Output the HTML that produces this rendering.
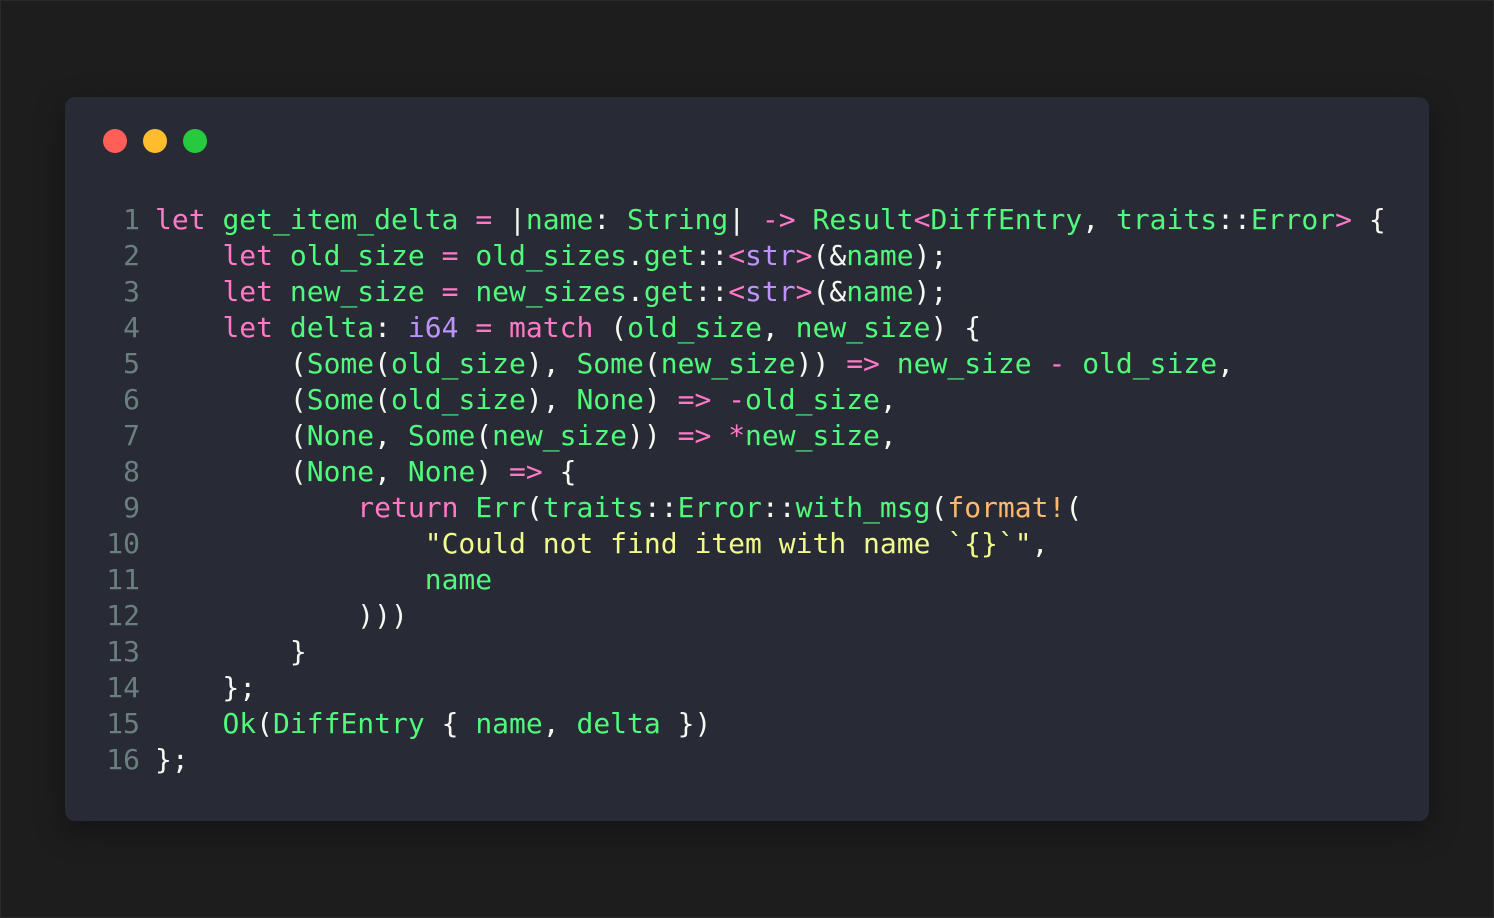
<!DOCTYPE html>
<html><head><meta charset="utf-8"><style>
html,body{margin:0;padding:0}
body{width:1494px;height:918px;background:#1d1d1d;position:relative;overflow:hidden;box-shadow:inset 0 0 0 1px #2a2a2a}
.win{position:absolute;left:65px;top:97px;width:1364px;height:724px;background:#282a36;border-radius:10px;box-shadow:0 10px 30px rgba(0,0,0,.35)}
.dot{position:absolute;top:129px;width:24px;height:24px;border-radius:50%}
.ln{position:absolute;left:80px;width:60px;text-align:right;color:#6b7f7f}
.code,.ln{font-family:"DejaVu Sans Mono","Liberation Mono",monospace;font-size:28px;line-height:36px;white-space:pre}
.code{position:absolute;left:155px;top:202px;color:#f8f8f2}
.ln{top:202px}
.k{color:#ff79c6}.g{color:#50fa7b}.p{color:#bd93f9}.o{color:#ffb86c}.y{color:#f1fa8c}
</style></head><body>
<div class="win"></div>
<div class="dot" style="left:103px;background:#ff5f56"></div>
<div class="dot" style="left:143px;background:#ffbd2e"></div>
<div class="dot" style="left:183px;background:#27c93f"></div>
<div class="ln">1
2
3
4
5
6
7
8
9
10
11
12
13
14
15
16</div>
<div class="code"><span class="k">let</span> <span class="g">get_item_delta</span> <span class="k">=</span> |<span class="g">name</span>: <span class="g">String</span>| <span class="k">-&gt;</span> <span class="g">Result</span><span class="k">&lt;</span><span class="g">DiffEntry</span>, <span class="g">traits</span>::<span class="g">Error</span><span class="k">&gt;</span> {
    <span class="k">let</span> <span class="g">old_size</span> <span class="k">=</span> <span class="g">old_sizes</span>.<span class="g">get</span>::<span class="k">&lt;</span><span class="p">str</span><span class="k">&gt;</span>(&amp;<span class="g">name</span>);
    <span class="k">let</span> <span class="g">new_size</span> <span class="k">=</span> <span class="g">new_sizes</span>.<span class="g">get</span>::<span class="k">&lt;</span><span class="p">str</span><span class="k">&gt;</span>(&amp;<span class="g">name</span>);
    <span class="k">let</span> <span class="g">delta</span>: <span class="p">i64</span> <span class="k">=</span> <span class="k">match</span> (<span class="g">old_size</span>, <span class="g">new_size</span>) {
        (<span class="g">Some</span>(<span class="g">old_size</span>), <span class="g">Some</span>(<span class="g">new_size</span>)) <span class="k">=&gt;</span> <span class="g">new_size</span> <span class="k">-</span> <span class="g">old_size</span>,
        (<span class="g">Some</span>(<span class="g">old_size</span>), <span class="g">None</span>) <span class="k">=&gt;</span> <span class="k">-</span><span class="g">old_size</span>,
        (<span class="g">None</span>, <span class="g">Some</span>(<span class="g">new_size</span>)) <span class="k">=&gt;</span> <span class="k">*</span><span class="g">new_size</span>,
        (<span class="g">None</span>, <span class="g">None</span>) <span class="k">=&gt;</span> {
            <span class="k">return</span> <span class="g">Err</span>(<span class="g">traits</span>::<span class="g">Error</span>::<span class="g">with_msg</span>(<span class="o">format!</span>(
                <span class="y">"Could not find item with name `{}`"</span>,
                <span class="g">name</span>
            )))
        }
    };
    <span class="g">Ok</span>(<span class="g">DiffEntry</span> { <span class="g">name</span>, <span class="g">delta</span> })
};</div>
</body></html>
